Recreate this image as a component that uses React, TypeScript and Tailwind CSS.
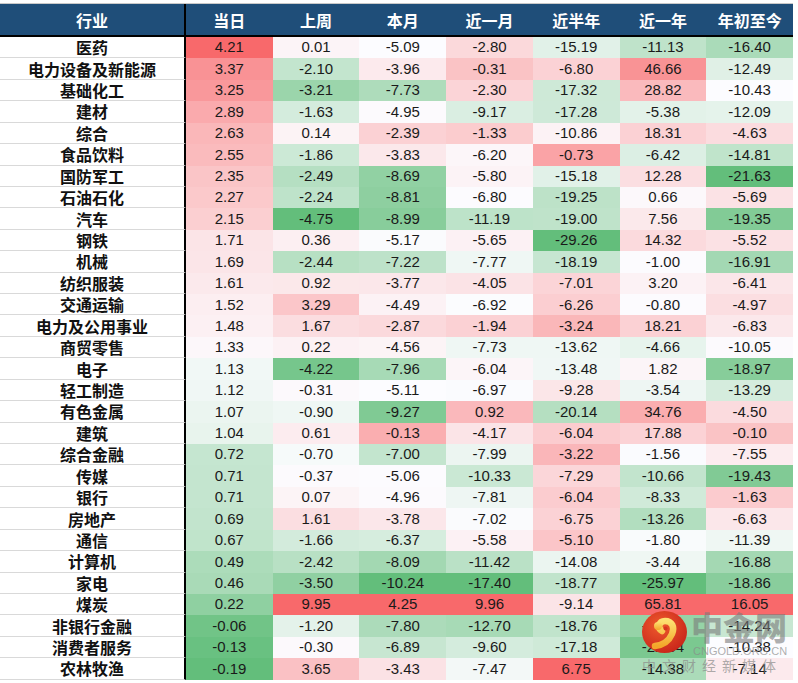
import React from "react";

type Row = [string, number[]];

const headers = ["当日", "上周", "本月", "近一月", "近半年", "近一年", "年初至今"];

const rows: Row[] = [
  ["医药", [4.21, 0.01, -5.09, -2.8, -15.19, -11.13, -16.4]],
  ["电力设备及新能源", [3.37, -2.1, -3.96, -0.31, -6.8, 46.66, -12.49]],
  ["基础化工", [3.25, -3.21, -7.73, -2.3, -17.32, 28.82, -10.43]],
  ["建材", [2.89, -1.63, -4.95, -9.17, -17.28, -5.38, -12.09]],
  ["综合", [2.63, 0.14, -2.39, -1.33, -10.86, 18.31, -4.63]],
  ["食品饮料", [2.55, -1.86, -3.83, -6.2, -0.73, -6.42, -14.81]],
  ["国防军工", [2.35, -2.49, -8.69, -5.8, -15.18, 12.28, -21.63]],
  ["石油石化", [2.27, -2.24, -8.81, -6.8, -19.25, 0.66, -5.69]],
  ["汽车", [2.15, -4.75, -8.99, -11.19, -19.0, 7.56, -19.35]],
  ["钢铁", [1.71, 0.36, -5.17, -5.65, -29.26, 14.32, -5.52]],
  ["机械", [1.69, -2.44, -7.22, -7.77, -18.19, -1.0, -16.91]],
  ["纺织服装", [1.61, 0.92, -3.77, -4.05, -7.01, 3.2, -6.41]],
  ["交通运输", [1.52, 3.29, -4.49, -6.92, -6.26, -0.8, -4.97]],
  ["电力及公用事业", [1.48, 1.67, -2.87, -1.94, -3.24, 18.21, -6.83]],
  ["商贸零售", [1.33, 0.22, -4.56, -7.73, -13.62, -4.66, -10.05]],
  ["电子", [1.13, -4.22, -7.96, -6.04, -13.48, 1.82, -18.97]],
  ["轻工制造", [1.12, -0.31, -5.11, -6.97, -9.28, -3.54, -13.29]],
  ["有色金属", [1.07, -0.9, -9.27, 0.92, -20.14, 34.76, -4.5]],
  ["建筑", [1.04, 0.61, -0.13, -4.17, -6.04, 17.88, -0.1]],
  ["综合金融", [0.72, -0.7, -7.0, -7.99, -3.22, -1.56, -7.55]],
  ["传媒", [0.71, -0.37, -5.06, -10.33, -7.29, -10.66, -19.43]],
  ["银行", [0.71, 0.07, -4.96, -7.81, -6.04, -8.33, -1.63]],
  ["房地产", [0.69, 1.61, -3.78, -7.02, -6.75, -13.26, -6.63]],
  ["通信", [0.67, -1.66, -6.37, -5.58, -5.1, -1.8, -11.39]],
  ["计算机", [0.49, -2.42, -8.09, -11.42, -14.08, -3.44, -16.88]],
  ["家电", [0.46, -3.5, -10.24, -17.4, -18.77, -25.97, -18.86]],
  ["煤炭", [0.22, 9.95, 4.25, 9.96, -9.14, 65.81, 16.05]],
  ["非银行金融", [-0.06, -1.2, -7.8, -12.7, -18.76, -17.66, -14.24]],
  ["消费者服务", [-0.13, -0.3, -6.89, -9.6, -17.18, -22.04, -10.38]],
  ["农林牧渔", [-0.19, 3.65, -3.43, -7.47, 6.75, -14.38, -7.14]],
];

const GREEN = [99, 190, 123];
const WHITE = [252, 252, 255];
const RED = [248, 105, 107];

function lerp(a: number[], b: number[], t: number) {
  const c = a.map((v, i) => Math.round(v + (b[i] - v) * t));
  return `rgb(${c[0]},${c[1]},${c[2]})`;
}

const scales = headers.map((_, ci) => {
  const vals = rows.map((r) => r[1][ci]).sort((a, b) => a - b);
  const n = vals.length;
  const rank = 0.5 * (n - 1);
  const lo = Math.floor(rank);
  const mid = vals[lo] + (vals[Math.min(lo + 1, n - 1)] - vals[lo]) * (rank - lo);
  return { min: vals[0], max: vals[n - 1], mid };
});

function colorFor(v: number, ci: number) {
  const { min, max, mid } = scales[ci];
  if (v <= mid) {
    const t = mid === min ? 1 : (v - min) / (mid - min);
    return lerp(GREEN, WHITE, t);
  }
  const t = max === mid ? 1 : (v - mid) / (max - mid);
  return lerp(WHITE, RED, t);
}

function Logo() {
  return (
    <svg width="45" height="42" viewBox="0 0 45 42" className="shrink-0 mt-[1px]">
      <defs>
        <radialGradient id="lg-bg" cx="0.4" cy="0.35" r="0.7">
          <stop offset="0" stopColor="#ee5a2c" />
          <stop offset="1" stopColor="#c8241a" />
        </radialGradient>
        <linearGradient id="lg-sw" x1="0" y1="0" x2="0" y2="1">
          <stop offset="0" stopColor="#fde070" />
          <stop offset="1" stopColor="#f3a62a" />
        </linearGradient>
      </defs>
      <ellipse cx="22.5" cy="21" rx="22.5" ry="21" fill="url(#lg-bg)" />
      <path
        d="M20 20 C 15 17, 17 10, 23 10 C 30 10, 33 16, 30 23 C 27 30, 21 34, 13 35"
        fill="none"
        stroke="url(#lg-sw)"
        strokeWidth="6.5"
        strokeLinecap="round"
      />
      <circle cx="16" cy="15" r="4" fill="url(#lg-sw)" />
      <circle cx="23.5" cy="17.5" r="2" fill="#d6351f" />
    </svg>
  );
}

export default function App() {
  return (
    <div className="relative w-[798px] h-[683px] bg-white overflow-hidden font-['Liberation_Sans','Noto_Sans_CJK_SC',sans-serif]">
      <div className="pt-[3px] w-[793px]">
        <div className="border-t border-[#c9c9c9] grid grid-cols-[186px_repeat(7,minmax(0,1fr))]">
          <div className="h-[33px] box-border bg-[#1f4e79] border-b-2 border-r-2 border-black flex items-center justify-center text-white font-bold text-[16px] font-['Noto_Sans_CJK_SC',sans-serif]">
            行业
          </div>
          {headers.map((h) => (
            <div
              key={h}
              className="h-[33px] box-border bg-[#1f4e79] border-b-2 border-black flex items-center justify-center text-white font-bold text-[16px] font-['Noto_Sans_CJK_SC',sans-serif]"
            >
              {h}
            </div>
          ))}
          {rows.map(([name, vals]) => (
            <React.Fragment key={name}>
              <div className="h-[21.43px] box-border border-r-2 border-b border-r-black border-b-[#d9d9d9] flex items-center justify-center text-[16px] font-bold text-[#111] font-['Noto_Sans_CJK_SC',sans-serif]">
                {name}
              </div>
              {vals.map((v, ci) => (
                <div
                  key={ci}
                  className="h-[21.43px] flex items-center justify-center text-[15px] text-[#1a1a1a]"
                  style={{ backgroundColor: colorFor(v, ci) }}
                >
                  {v.toFixed(2)}
                </div>
              ))}
            </React.Fragment>
          ))}
        </div>
      </div>

      <div className="absolute left-[642px] top-[610px] flex flex-col pointer-events-none">
        <div className="flex items-start gap-[4px]">
          <Logo />
          <div className="flex flex-col">
            <span className="text-[32px] leading-none font-black text-[#7a7a7a]/60 font-['Noto_Sans_CJK_SC',serif]">
              中金网
            </span>
            <span className="mt-[4px] ml-[2px] text-[11px] leading-none text-[#8a8a8a]/70 font-['Liberation_Sans',sans-serif]">
              CNGOLD.ORG.CN
            </span>
          </div>
        </div>
        <span className="mt-[1px] text-[14px] leading-none tracking-[6px] text-[#8a8a8a]/70 font-['Noto_Sans_CJK_SC',sans-serif]">
          中文财经新媒体
        </span>
      </div>
    </div>
  );
}
